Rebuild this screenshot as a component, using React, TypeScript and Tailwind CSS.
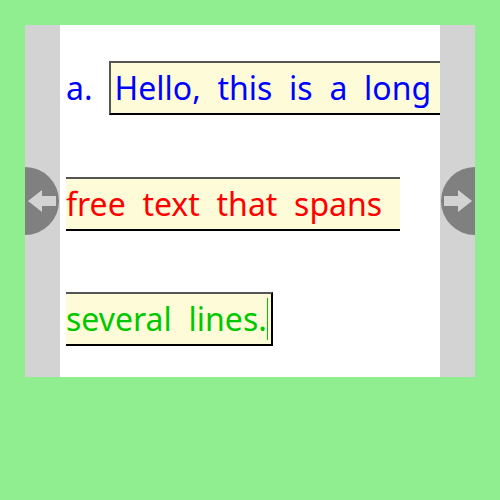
import React from 'react';

function NavCircle({ side }: { side: 'left' | 'right' }) {
    const isLeft = side === 'left';
    return (
        <svg
            width="68"
            height="68"
            viewBox="0 0 68 68"
            className={`absolute top-[142px] ${isLeft ? 'left-[-34px]' : 'right-[-34px]'}`}
        >
            <circle cx="34" cy="34" r="34" fill="#808080" />
            {isLeft ? (
                <polygon points="37,34 51,23 51,29 65,29 65,39 51,39 51,45" fill="#d3d3d3" />
            ) : (
                <polygon points="31,34 17,23 17,29 3,29 3,39 17,39 17,45" fill="#d3d3d3" />
            )}
        </svg>
    );
}

export default function App() {
    const box = 'inline-flex items-center h-[54px] bg-[#fefcd8] border-y-2 border-t-[#555] border-b-black';

    return (
        <div className="w-[500px] h-[500px] bg-[#90ee90] pt-[25px] pl-[25px]">
            <div className="relative flex w-[450px] h-[352px] overflow-hidden">
                <div className="w-[35px] bg-[#d3d3d3]" />

                {/* editable text area */}
                <div
                    className="w-[380px] bg-white overflow-hidden pl-[6px] pt-[36px] flex flex-col gap-[61.5px] text-[32px] whitespace-nowrap [word-spacing:8.4px]"
                    style={{ fontFamily: '"Noto Sans", sans-serif' }}
                >
                    <div className="flex items-center">
                        <span className="text-[#0000ff] mr-[16px]">a.</span>
                        <span className={`${box} border-l-2 border-l-[#555] pl-[4px] pr-[30px] text-[#0000ff]`}>
                            Hello, this is a long
                        </span>
                    </div>
                    <div className="flex items-center">
                        <span className={`${box} pr-[18px] text-[#ff0000]`}>free text that spans</span>
                    </div>
                    <div className="flex items-center">
                        <span className={`${box} border-r-2 border-r-black pr-[3px] text-[#00c800]`}>
                            several lines.
                            <span className="w-px h-[42px] bg-[#00c800]" />
                        </span>
                    </div>
                </div>

                <div className="w-[35px] bg-[#d3d3d3]" />

                <NavCircle side="left" />
                <NavCircle side="right" />
            </div>
        </div>
    );
}
